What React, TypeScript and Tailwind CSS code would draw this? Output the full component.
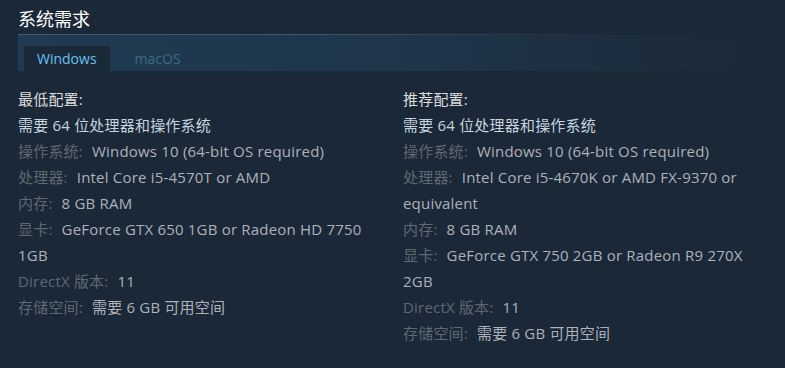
const font = { fontFamily: '"Open Sans", "Noto Sans CJK SC", sans-serif' };

type Row = { label?: string; value: string };

const specs: { title: string; rows: Row[] }[] = [
  {
    title: "最低配置:",
    rows: [
      { value: "需要 64 位处理器和操作系统" },
      { label: "操作系统:", value: "Windows 10 (64-bit OS required)" },
      { label: "处理器:", value: "Intel Core i5-4570T or AMD" },
      { label: "内存:", value: "8 GB RAM" },
      { label: "显卡:", value: "GeForce GTX 650 1GB or Radeon HD 7750 1GB" },
      { label: "DirectX 版本:", value: "11" },
      { label: "存储空间:", value: "需要 6 GB 可用空间" },
    ],
  },
  {
    title: "推荐配置:",
    rows: [
      { value: "需要 64 位处理器和操作系统" },
      { label: "操作系统:", value: "Windows 10 (64-bit OS required)" },
      { label: "处理器:", value: "Intel Core i5-4670K or AMD FX-9370 or equivalent" },
      { label: "内存:", value: "8 GB RAM" },
      { label: "显卡:", value: "GeForce GTX 750 2GB or Radeon R9 270X 2GB" },
      { label: "DirectX 版本:", value: "11" },
      { label: "存储空间:", value: "需要 6 GB 可用空间" },
    ],
  },
];

export default function App() {
  return (
    <div className="h-[368px] w-[785px] overflow-hidden bg-[#1b2838] px-[18px]" style={font}>
      <h2 className="pt-[6px] text-[18px] leading-[26px] text-white">系统需求</h2>
      <div className="mt-[2px] h-px w-[600px] bg-gradient-to-r from-[#3f5d75] via-[#3a566d] to-transparent" />
      <div className="flex h-[36px] items-end bg-gradient-to-r from-[#1f3a51] via-[#1f364b] to-transparent pl-[6px]">
        <div className="flex h-[25px] items-center bg-[#1a2938] px-[13px] text-[14px] text-[#67c1f5]">Windows</div>
        <div className="flex h-[25px] items-center px-[25px] text-[14px] text-[#3e6a89]">macOS</div>
      </div>
      <div className="mt-[15px] grid grid-cols-[367px_1fr] gap-[18px]">
        {specs.map((col) => (
          <div key={col.title} className="text-[15px] leading-[26px] tracking-[0.2px]">
            <div className="text-[#dcdedf]">{col.title}</div>
            <ul>
              {col.rows.map((r, i) => (
                <li key={i} className={r.label ? "text-[#acb2b8]" : "text-[#c6d4df]"}>
                  {r.label && <span className="mr-[9px] text-[#5f6870]">{r.label}</span>}
                  {r.value}
                </li>
              ))}
            </ul>
          </div>
        ))}
      </div>
    </div>
  );
}
